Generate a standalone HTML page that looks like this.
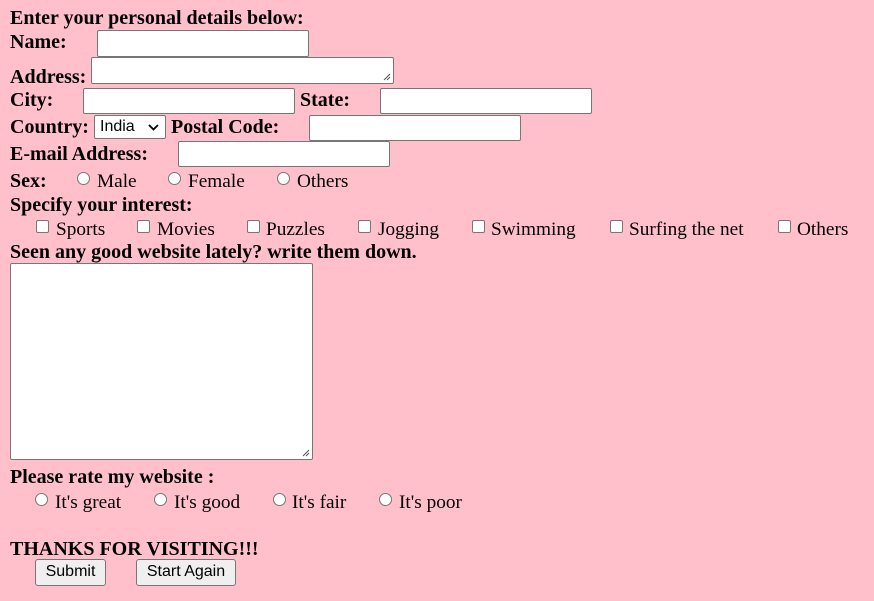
<!DOCTYPE html>
<html><head><style>
html,body{margin:0;padding:0;background:#ffc0cb;width:874px;height:601px;overflow:hidden}
body{position:relative;font-family:"Liberation Serif",serif;font-size:19.3px;color:#000}
.t{position:absolute;line-height:19px;white-space:nowrap}
.b{font-weight:bold;font-size:20px}
.in{position:absolute;background:#fff;border:1px solid #767676;border-radius:2px;box-sizing:border-box}
.r{position:absolute;width:13px;height:13px;border:1px solid #767676;border-radius:50%;background:#fff;box-sizing:border-box}
.c{position:absolute;width:13px;height:13px;border:1px solid #767676;border-radius:2px;background:#fff;box-sizing:border-box}
.btn{position:absolute;background:#efefef;border:1px solid #767676;border-radius:3px;box-sizing:border-box;font-family:"Liberation Sans",sans-serif;font-size:16px;text-align:center;line-height:24px}
.grip{position:absolute;right:2px;bottom:2px;width:8px;height:8px}
</style></head><body>
<div class="t b" style="left:10px;top:9px">Enter your personal details below:</div>
<div class="t b" style="left:10px;top:33px">Name:</div>
<div class="in" style="left:97px;top:30px;width:212px;height:27px"></div>
<div class="t b" style="left:10px;top:68px">Address:</div>
<div class="in" style="left:91px;top:57px;width:303px;height:27px"><svg class="grip" viewBox="0 0 8 8"><path d="M1 7L7 1M4 7L7 4" stroke="#555" stroke-width="1"/></svg></div>
<div class="t b" style="left:10px;top:91px">City:</div>
<div class="in" style="left:83px;top:88px;width:212px;height:26px"></div>
<div class="t b" style="left:300px;top:91px">State:</div>
<div class="in" style="left:380px;top:88px;width:212px;height:26px"></div>
<div class="t b" style="left:10px;top:118px">Country:</div>
<div class="in" style="left:94px;top:115px;width:72px;height:24px;font-family:'Liberation Sans',sans-serif;font-size:16px;line-height:22px;padding-left:5px">India<svg style="position:absolute;right:6px;top:8px" width="11" height="7" viewBox="0 0 11 7"><path d="M1 1l4.5 4.5L10 1" stroke="#000" stroke-width="1.8" fill="none"/></svg></div>
<div class="t b" style="left:171px;top:118px">Postal Code:</div>
<div class="in" style="left:309px;top:115px;width:212px;height:26px"></div>
<div class="t b" style="left:10px;top:145px">E-mail Address:</div>
<div class="in" style="left:178px;top:141px;width:212px;height:26px"></div>
<div class="t b" style="left:10px;top:172px">Sex:</div>
<div class="r" style="left:77px;top:172px"></div><div class="t" style="left:97px;top:172px">Male</div>
<div class="r" style="left:168px;top:172px"></div><div class="t" style="left:188px;top:172px">Female</div>
<div class="r" style="left:277px;top:172px"></div><div class="t" style="left:297px;top:172px">Others</div>
<div class="t b" style="left:10px;top:196px">Specify your interest:</div>
<div class="c" style="left:36px;top:220px"></div><div class="t" style="left:56px;top:220px">Sports</div>
<div class="c" style="left:137px;top:220px"></div><div class="t" style="left:157px;top:220px">Movies</div>
<div class="c" style="left:247px;top:220px"></div><div class="t" style="left:266px;top:220px">Puzzles</div>
<div class="c" style="left:358px;top:220px"></div><div class="t" style="left:378px;top:220px">Jogging</div>
<div class="c" style="left:472px;top:220px"></div><div class="t" style="left:491px;top:220px">Swimming</div>
<div class="c" style="left:610px;top:220px"></div><div class="t" style="left:629px;top:220px">Surfing the net</div>
<div class="c" style="left:778px;top:220px"></div><div class="t" style="left:797px;top:220px">Others</div>
<div class="t b" style="left:10px;top:243px">Seen any good website lately? write them down.</div>
<div class="in" style="left:10px;top:263px;width:303px;height:197px"><svg class="grip" viewBox="0 0 8 8"><path d="M1 7L7 1M4 7L7 4" stroke="#555" stroke-width="1"/></svg></div>
<div class="t b" style="left:10px;top:468px">Please rate my website :</div>
<div class="r" style="left:35px;top:493px"></div><div class="t" style="left:55px;top:493px">It's great</div>
<div class="r" style="left:154px;top:493px"></div><div class="t" style="left:174px;top:493px">It's good</div>
<div class="r" style="left:273px;top:493px"></div><div class="t" style="left:292px;top:493px">It's fair</div>
<div class="r" style="left:379px;top:493px"></div><div class="t" style="left:399px;top:493px">It's poor</div>
<div class="t b" style="left:10px;top:540px">THANKS FOR VISITING!!!</div>
<div class="btn" style="left:35px;top:559px;width:71px;height:27px">Submit</div>
<div class="btn" style="left:136px;top:559px;width:100px;height:27px">Start Again</div>
</body></html>
